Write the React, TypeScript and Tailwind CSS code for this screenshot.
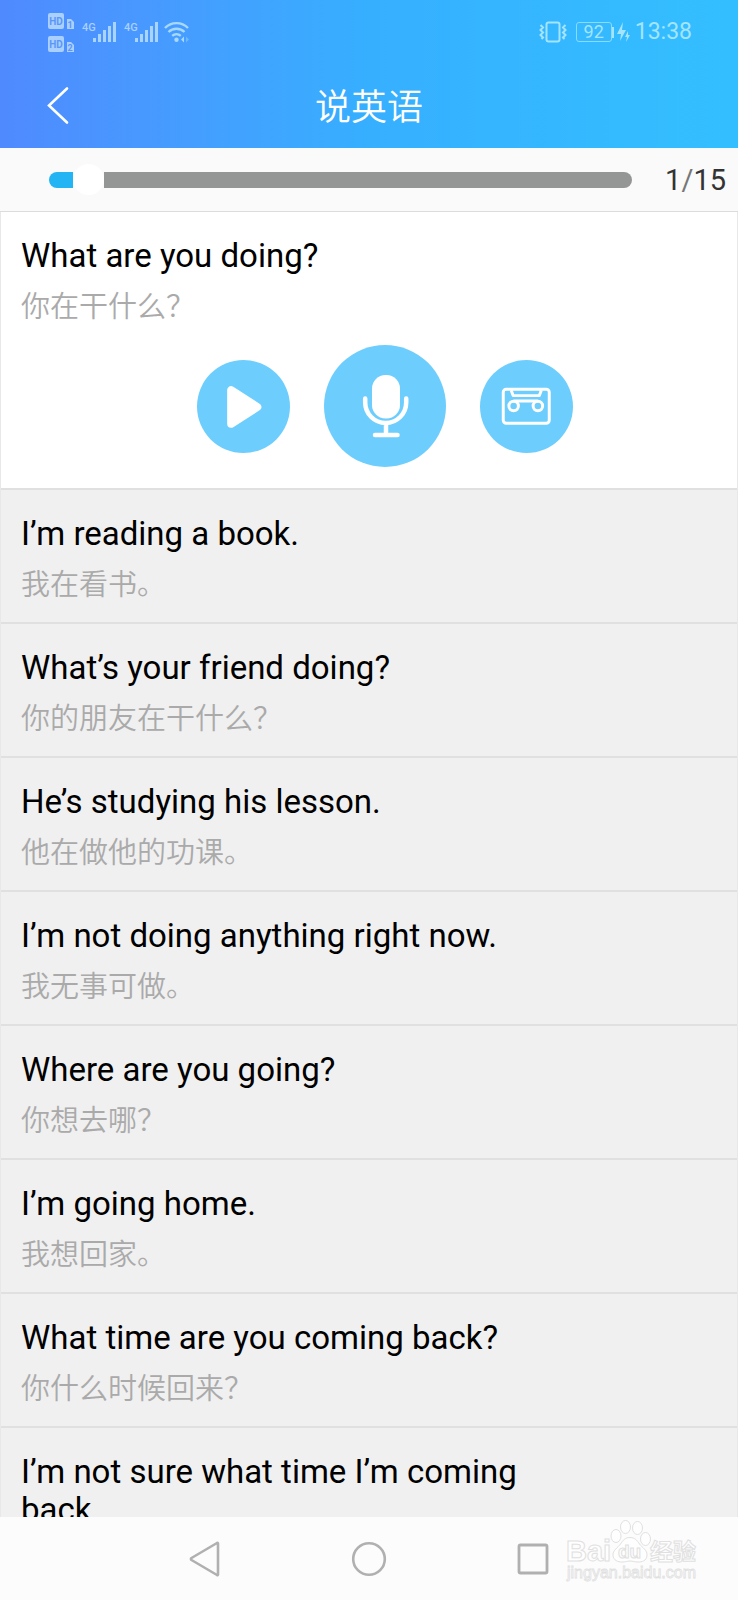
import { useState } from "react";

const TOTAL = 15;

const sentences = [
  { en: "What are you doing?", zh: "你在干什么？" },
  { en: "I’m reading a book.", zh: "我在看书。" },
  { en: "What’s your friend doing?", zh: "你的朋友在干什么？" },
  { en: "He’s studying his lesson.", zh: "他在做他的功课。" },
  { en: "I’m not doing anything right now.", zh: "我无事可做。" },
  { en: "Where are you going?", zh: "你想去哪？" },
  { en: "I’m going home.", zh: "我想回家。" },
  { en: "What time are you coming back?", zh: "你什么时候回来？" },
  { en: "I’m not sure what time I’m coming back.", zh: "" },
];

function HdBadge({ sim }: { sim: string }) {
  return (
    <svg width="28" height="16" viewBox="0 0 28 16" className="block font-bold">
      <rect width="16" height="16" rx="2" fill="#a9d0ff" />
      <text x="8" y="12" fontSize="10" textAnchor="middle" fill="#5a97f8">
        HD
      </text>
      <path d="M19 6h4l3 3v7h-7z" fill="#a9d0ff" />
      <text x="22" y="15" fontSize="9" textAnchor="middle" fill="#5a97f8">
        {sim}
      </text>
    </svg>
  );
}

function Signal() {
  return (
    <svg width="34" height="22" viewBox="0 0 34 22" className="mr-2 block font-medium">
      <text x="0" y="10" fontSize="11" fill="#a9d0ff">
        4G
      </text>
      <path d="M11 17h3v4h-3zM16 13h3v8h-3zM21 9h3v12h-3zM26 5h3v16h-3zM31 1h3v20h-3z" fill="#a9d4ff" />
    </svg>
  );
}

function StatusBar() {
  return (
    <div className="flex h-16 items-center justify-between pr-[46px] pl-12">
      <div className="flex items-center">
        <div className="mr-1.5 flex flex-col gap-[7px]">
          <HdBadge sim="1" />
          <HdBadge sim="2" />
        </div>
        <Signal />
        <Signal />
        <svg width="26" height="22" viewBox="0 0 26 22" className="-ml-0.5 block" fill="none" stroke="#a9d8ff" strokeWidth="2.4">
          <path d="M1 7a16 16 0 0 1 23 0M4.500 11a11.500 11.500 0 0 1 16 0M8.200 14.800a6.500 6.500 0 0 1 8.600 0" />
          <circle cx="12.500" cy="18.800" r="2.200" fill="#a9d8ff" stroke="none" />
          <path d="M20 15.500v6l-3-3z" fill="#a9d8ff" stroke="none" />
          <path d="M22 15.500v6l3-3z" fill="#6bb9ff" stroke="none" />
        </svg>
      </div>
      <div className="flex items-center text-[#a4e4ff]">
        <svg width="28" height="22" viewBox="0 0 28 22" className="mr-[9px] block" fill="none" stroke="currentColor" strokeWidth="2">
          <rect x="7.500" y="1.500" width="13" height="19" rx="2" />
          <path d="M1.500 4l2.500 2.500-2.500 2.500 2.500 2.500-2.500 2.500 2.500 2.500-1.500 1.500M26.500 4L24 6.500l2.500 2.500-2.500 2.500 2.500 2.500-2.500 2.500 1.500 1.500" />
        </svg>
        <div className="flex h-5 w-9 items-center justify-center rounded-[3px] border border-[#8adcff] text-lg leading-none">
          92
        </div>
        <svg width="18" height="22" viewBox="0 0 18 22" className="mr-[5px] block" fill="currentColor">
          <rect x="0" y="6" width="2" height="11" />
          <path d="M11 1L5 13h4l-1 7 6-11h-4zM16 10l-3 6h2l-1 5 4-7h-2z" />
        </svg>
        <time className="text-[23px] leading-8">13:38</time>
      </div>
    </div>
  );
}

function ProgressBar() {
  const [value, setValue] = useState(1);
  const start = `calc((100% - 1px) * ${value / TOTAL} - 15px)`;
  const end = `calc((100% - 1px) * ${value / TOTAL} + 16px)`;

  return (
    <div className="flex h-16 shrink-0 items-center border-b border-[#dcdcdc] bg-[#fafafa] pl-[49px]">
      <div
        className="flex h-4 flex-1 items-center rounded-full"
        style={{
          background: `linear-gradient(to right, #22b4f3 ${start}, #fafafa ${start}, #fafafa ${end}, #949695 ${end})`,
        }}
      >
        {/* the thumb may travel 15px past both ends of the track */}
        <input
          type="range"
          aria-label="进度"
          min={0}
          max={TOTAL}
          value={value}
          onChange={(e) => setValue(Number(e.target.value))}
          className="-mx-[15px] h-8 w-[calc(100%+30px)] shrink-0 appearance-none bg-transparent [&::-webkit-slider-thumb]:size-[31px] [&::-webkit-slider-thumb]:appearance-none [&::-webkit-slider-thumb]:rounded-full [&::-webkit-slider-thumb]:bg-white"
        />
      </div>
      <div className="w-[106px] pr-3 text-right text-[29px] leading-8 text-[#333]">
        {value}
        <span className="text-[#777]">/</span>
        {TOTAL}
      </div>
    </div>
  );
}

function Controls() {
  return (
    <div className="mt-[22px] flex items-center justify-center gap-[34px] pl-8">
      <button aria-label="播放" className="size-[93px] rounded-full bg-[#6dcefe]">
        <svg viewBox="0 0 94 94" fill="#fff" stroke="#fff" strokeWidth="8" strokeLinejoin="round">
          <path d="M34.500 30.500v34L61 47.500z" />
        </svg>
      </button>
      <button aria-label="录音" className="size-[122px] rounded-full bg-[#6dcefe]">
        <svg viewBox="0 0 122 122" fill="none" stroke="#fff" strokeWidth="4.500" strokeLinecap="round">
          <rect x="48" y="30" width="28" height="43.500" rx="13.500" fill="#fff" stroke="none" />
          <path d="M41.200 53.500v4a20.500 20.500 0 0 0 41 0v-4M62 79v10M51 90h22.500" />
        </svg>
      </button>
      <button aria-label="回放" className="size-[93px] rounded-full bg-[#6dcefe]">
        <svg viewBox="0 0 94 94" fill="none" stroke="#fff" strokeWidth="3" strokeLinejoin="round">
          <rect x="23.500" y="29.500" width="46.500" height="34.500" rx="3" />
          <path d="M31.500 30.500l2 5.500h26.500l2-5.500M34 41.500h24.500" />
          <circle cx="34" cy="46.500" r="4.800" />
          <circle cx="58.500" cy="46.500" r="4.800" />
        </svg>
      </button>
    </div>
  );
}

function Watermark() {
  return (
    <svg
      width="145"
      height="83"
      viewBox="0 0 145 83"
      className="pointer-events-none absolute right-[33px] bottom-0 font-['Liberation_Sans','Noto_Sans_CJK_SC',sans-serif] font-bold"
      fill="#fefefe"
      stroke="#e0e0e0"
      strokeWidth="1"
    >
      <text x="6" y="44" fontSize="29">
        Bai
      </text>
      <ellipse cx="56" cy="19" rx="5" ry="6.500" />
      <ellipse cx="65.500" cy="10" rx="5" ry="6.500" />
      <ellipse cx="77.500" cy="11" rx="5" ry="6.500" />
      <ellipse cx="85.500" cy="22" rx="5" ry="6.500" />
      <path d="M70 20.500c5 0 7 3 9.500 6.500s8 6 7.500 11.500-5 6.500-9 6.500-5-1-8-1-4 1-8 1-8.500-1.500-9-6.500S58 30.500 60.500 27 65 20.500 70 20.500z" />
      <text x="58" y="41" fontSize="19">
        du
      </text>
      <text x="90" y="43" fontSize="23">
        经验
      </text>
      <text x="7" y="61" fontSize="16" strokeWidth="0.800" className="font-normal">
        jingyan.baidu.com
      </text>
    </svg>
  );
}

export default function App() {
  return (
    <div className="flex h-screen flex-col overflow-hidden bg-white font-[Roboto,'Noto_Sans_CJK_SC',sans-serif]">
      <header className="shrink-0 bg-linear-to-r from-[#4f8aff] via-[#36afff] to-[#33bfff] text-white">
        <StatusBar />
        <div className="grid h-21 grid-cols-[1fr_auto_1fr] items-center">
          <button aria-label="返回" className="ml-[46px] w-6">
            <svg width="24" height="40" viewBox="0 0 24 40" fill="none" stroke="#fff" strokeWidth="2.600" strokeLinecap="round">
              <path d="M21 2.500L3 19.500l18 17" />
            </svg>
          </button>
          <h1 className="pt-1 text-4xl font-[350]">说英语</h1>
        </div>
      </header>

      <ProgressBar />

      <ul className="min-h-0 flex-1 overflow-y-auto border-x border-[#e8e8e8] [scrollbar-width:none]">
        {sentences.map((s, i) => (
          <li
            key={s.en}
            className={
              i === 0
                ? "border-b-2 border-[#e0e0e0] bg-white pt-[25px] pb-[21px]"
                : "border-b-2 border-[#e0e0e0] bg-[#f0f0f0] pt-[25px] pb-[21px]"
            }
          >
            <div className="pr-[140px] pl-5">
              <p className="text-[33px] leading-[38px] text-black">{s.en}</p>
              <p lang="zh" className="mt-4 min-h-8 text-[29px] leading-8 font-[350] text-[#aaa]">
                {s.zh}
              </p>
            </div>
            {i === 0 && <Controls />}
          </li>
        ))}
      </ul>

      <nav className="relative flex h-[83px] shrink-0 items-center justify-center bg-[#fcfcfc] text-[#b0b0b0]">
        <button aria-label="后退" className="flex w-41 justify-center">
          <svg width="36" height="36" viewBox="0 0 36 36" fill="none" stroke="currentColor" strokeWidth="2.600" strokeLinejoin="round">
            <path d="M31 2.500v31q0 1-1 .5L4.500 19q-1-1 0-2L30 2q1-.5 1 .5z" />
          </svg>
        </button>
        <button aria-label="主页" className="flex w-41 justify-center">
          <svg width="36" height="36" viewBox="0 0 36 36" fill="none" stroke="currentColor" strokeWidth="2.600">
            <circle cx="18" cy="18" r="15.800" />
          </svg>
        </button>
        <button aria-label="最近任务" className="flex w-41 justify-center">
          <svg width="36" height="36" viewBox="0 0 36 36" fill="none" stroke="currentColor" strokeWidth="2.800">
            <rect x="4" y="4" width="28" height="28" rx="1.500" />
          </svg>
        </button>
        <Watermark />
      </nav>
    </div>
  );
}
